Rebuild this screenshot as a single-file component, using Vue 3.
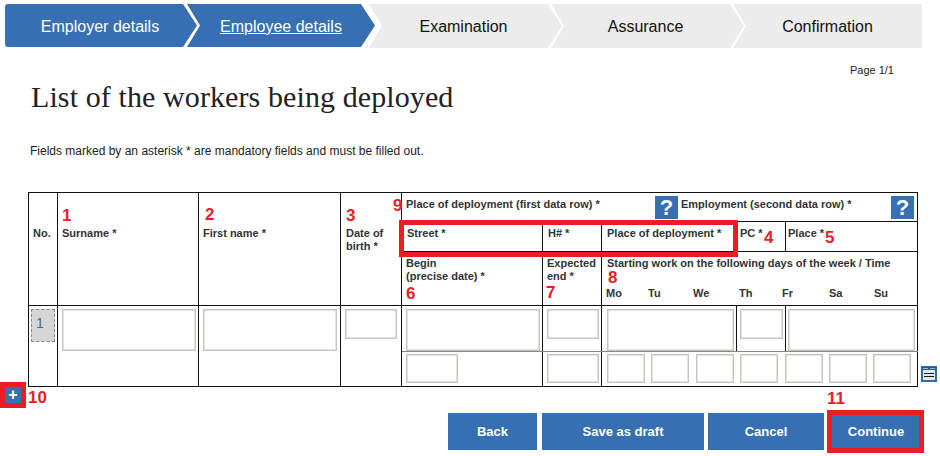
<template>
  <div class="page">
    <nav class="steps">
      <a
        v-for="(s, i) in steps"
        :key="s.label"
        :class="['step', `step-${i + 1}`, { done: s.done, current: s.current }]"
      >
        <span>{{ s.label }}</span>
      </a>
    </nav>

    <div class="page-no">Page 1/1</div>
    <h1>List of the workers being deployed</h1>
    <p class="hint">Fields marked by an asterisk * are mandatory fields and must be filled out.</p>

    <div class="table-wrap">
      <table>
        <colgroup>
          <col v-for="w in colWidths" :key="w.id" :style="{ width: w.px + 'px' }" />
        </colgroup>
        <tbody>
          <tr class="r-head1">
            <th rowspan="3" class="tall no">No.</th>
            <th rowspan="3" class="tall">Surname *</th>
            <th rowspan="3" class="tall">First name *</th>
            <th rowspan="3" class="tall dob">Date of<br />birth *</th>
            <th colspan="5" class="group-cell">
              <div class="groups">
                <div class="group first">
                  <span>Place of deployment (first data row) *</span>
                  <button class="help">?</button>
                </div>
                <div class="group second">
                  <span>Employment (second data row) *</span>
                  <button class="help">?</button>
                </div>
              </div>
            </th>
          </tr>
          <tr class="r-head2">
            <th class="pad5">Street *</th>
            <th class="pad5">H# *</th>
            <th class="pad5">Place of deployment *</th>
            <th class="pad3">PC *</th>
            <th class="pad2">Place *</th>
          </tr>
          <tr class="r-head3">
            <th>Begin<br />(precise date) *</th>
            <th>Expected<br />end *</th>
            <th colspan="3" class="pad5">
              Starting work on the following days of the week / Time
              <div class="days">
                <span v-for="d in days" :key="d">{{ d }}</span>
              </div>
            </th>
          </tr>
          <tr class="r-data1">
            <td rowspan="2" class="cell"><div class="row-no">1</div></td>
            <td rowspan="2" class="cell"><input class="wide tall-in" /></td>
            <td rowspan="2" class="cell"><input class="wide tall-in" /></td>
            <td rowspan="2" class="cell"><input class="short" /></td>
            <td class="cell soft"><input class="wide tall-in" /></td>
            <td class="cell soft"><input class="short" /></td>
            <td class="cell soft"><input class="place tall-in shift" /></td>
            <td class="cell soft"><input class="pc left" /></td>
            <td class="cell soft"><input class="place tall-in left2" /></td>
          </tr>
          <tr class="r-data2">
            <td class="cell"><input class="short low" /></td>
            <td class="cell"><input class="short low" /></td>
            <td colspan="3" class="cell">
              <div class="times">
                <input v-for="d in days" :key="d" class="time low" />
              </div>
            </td>
          </tr>
        </tbody>
      </table>

      <svg class="cal" viewBox="0 0 16 16" width="16" height="16">
        <rect width="16" height="16" fill="#2f6da8" />
        <rect x="1" y="1" width="14" height="3" fill="#1f5b96" />
        <rect x="2" y="2" width="5" height="1" fill="#9fb6cc" />
        <rect x="9" y="2" width="5" height="1" fill="#9fb6cc" />
        <rect x="2" y="4" width="12" height="10" fill="#dfe6ea" />
        <rect x="3" y="7" width="10" height="1" fill="#1a1a1a" />
        <rect x="3" y="10" width="10" height="1" fill="#1a1a1a" />
      </svg>
    </div>

    <div class="actions">
      <button class="btn back">Back</button>
      <button class="btn draft">Save as draft</button>
      <button class="btn cancel">Cancel</button>
      <button class="btn next">Continue</button>
    </div>

    <!-- red annotations sitting on top of the form -->
    <span
      v-for="n in marks"
      :key="n.t"
      class="mark"
      :style="{ left: n.x + 'px', top: n.y + 'px' }"
    >{{ n.t }}</span>
    <div class="box box-row"></div>
    <div class="box box-next"></div>
    <div class="box box-add"><div class="add">+</div></div>
  </div>
</template>

<script setup>
const steps = [
  { label: 'Employer details', done: true },
  { label: 'Employee details', done: true, current: true },
  { label: 'Examination' },
  { label: 'Assurance' },
  { label: 'Confirmation' }
];

const days = ['Mo', 'Tu', 'We', 'Th', 'Fr', 'Sa', 'Su'];

const colWidths = [29, 141, 142, 61, 141, 59, 135, 49, 132].map((px, id) => ({ id, px }));

const marks = [
  { t: '1', x: 62, y: 206 },
  { t: '2', x: 205, y: 205 },
  { t: '3', x: 346, y: 206 },
  { t: '9', x: 393, y: 196 },
  { t: '4', x: 764, y: 228 },
  { t: '5', x: 825, y: 228 },
  { t: '6', x: 406, y: 284 },
  { t: '7', x: 546, y: 283 },
  { t: '8', x: 608, y: 268 },
  { t: '10', x: 28, y: 388 },
  { t: '11', x: 827, y: 389 }
];
</script>

<style>
html,
body {
  margin: 0;
  background: #fff;
}
</style>

<style scoped>
.page {
  position: relative;
  width: 940px;
  height: 456px;
  overflow: hidden;
  font-family: "Liberation Sans", Arial, sans-serif;
  color: #222;
}

/* stepper */
.steps {
  display: flex;
  margin: 4px 18px 0 5px;
  height: 44px;
}

.step {
  display: flex;
  align-items: center;
  justify-content: center;
  flex: none;
  height: 44px;
  background: #ececec;
  color: #111;
  font-size: 16px;
  clip-path: polygon(0 0, calc(100% - 14px) 0, 100% 50%, calc(100% - 14px) 100%, 0 100%, 13px 50%);
}

.step span {
  padding: 2px 4px 0 0;
}

.step.done {
  height: 43px;
  background: #3670b2;
  color: #fff;
}

.step.current span {
  text-decoration: underline;
  padding-right: 0;
}

.step-1 {
  width: 192px;
  border-radius: 3px 0 0 3px;
  clip-path: polygon(0 0, calc(100% - 14px) 0, 100% 50%, calc(100% - 14px) 100%, 0 100%);
}

.step-1 span {
  padding-right: 2px;
}

.step-2 {
  width: 188px;
  margin-left: -10px;
}

.step-3 {
  width: 193px;
  margin-left: -6px;
}

.step-4 {
  width: 193px;
  margin-left: -11px;
}

.step-5 {
  width: 189px;
  margin-left: -11px;
  clip-path: polygon(0 0, 100% 0, 100% 100%, 0 100%, 13px 50%);
}

.step-5 span {
  padding-right: 0;
}

.page-no {
  margin: 16px 46px 0 0;
  text-align: right;
  font-size: 11px;
  line-height: 13px;
}

h1 {
  margin: 2px 0 0 31px;
  font-family: "Liberation Serif", Georgia, serif;
  font-size: 30px;
  line-height: 36px;
  letter-spacing: 0.1px;
  font-weight: 400;
  color: #222;
}

.hint {
  margin: 29px 0 0 30px;
  font-size: 12px;
  line-height: 14px;
}

/* table */
.table-wrap {
  position: relative;
  margin: 34px 0 0 28px;
  width: 912px;
}

table {
  width: 890px;
  table-layout: fixed;
  border-collapse: collapse;
  font-size: 11px;
  line-height: 13px;
}

th,
td {
  border: 1px solid #111;
  padding: 0;
  text-align: left;
  vertical-align: top;
}

th {
  padding: 5px 2px 0 4px;
  color: #333;
  font-weight: 700;
}

th.pad5 {
  padding-left: 5px;
}

th.pad3 {
  padding-left: 3px;
}

th.pad2 {
  padding-left: 2px;
}

.r-head1 { height: 29px; }
.r-head2 { height: 30px; }
.r-head3 { height: 54px; }
.r-data1 { height: 46px; }
.r-data2 { height: 35px; }

th.tall {
  padding-top: 34px;
}

th.dob {
  padding-left: 5px;
}

th.no {
  padding-right: 0;
}

th.group-cell {
  padding: 3px 0 0 4px;
}

.groups {
  display: flex;
}

.group {
  display: flex;
  justify-content: space-between;
  align-items: flex-start;
}

.group span {
  padding-top: 2px;
}

.group.first {
  width: 272px;
}

.group.second {
  width: 233px;
  margin-left: 3px;
}

.help {
  width: 23px;
  height: 23px;
  border: 0;
  padding: 0;
  background: #3670b2;
  color: #fff;
  font: 700 22px/23px "Liberation Sans", Arial, sans-serif;
}

.days {
  display: grid;
  grid-template-columns: 42px 45px 46px 43px 47px 45px auto;
  margin: 17px 0 0 -1px;
}

.cell {
  padding: 3px 0 0 4px;
}

td.soft {
  border-bottom-color: #888;
}

.row-no {
  box-sizing: border-box;
  width: 24px;
  height: 33px;
  margin-left: -2px;
  padding: 5px 0 0 4px;
  background: #d6d6d6;
  border: 1px dashed #888;
  color: #4f6688;
  font-size: 14px;
  line-height: 16px;
}

input {
  display: block;
  box-sizing: border-box;
  margin: 0;
  padding: 0;
  height: 30px;
  border: 1px solid #c8c5bf;
  box-shadow: inset 0 0 0 1px #e4e2de;
  background: #fff;
  outline: none;
}

.tall-in { height: 42px; }
.low { height: 29px; margin-top: -1px; }
.wide { width: 134px; }
.short { width: 52px; }
.place { width: 127px; }
.pc { width: 43px; }
.time { width: 38px; }
.shift { margin-left: 1px; }
.left { margin-left: -1px; }
.left2 { margin-left: -2px; }

.times {
  display: grid;
  grid-template-columns: repeat(7, 38px);
  column-gap: 6.4px;
  margin-left: 1px;
}

.cal {
  position: absolute;
  left: 893px;
  top: 174px;
}

/* bottom buttons */
.actions {
  display: flex;
  gap: 4px;
  margin: 26px 0 0 448px;
}

.btn {
  height: 37px;
  border: 0;
  padding: 0;
  background: #3670b2;
  color: #fff;
  font: 700 13px "Liberation Sans", Arial, sans-serif;
}

.back { width: 89px; margin-right: 1px; }
.draft { width: 162px; }
.cancel { width: 116px; }
.next { width: 88px; margin-left: 4px; }

/* annotations */
.mark {
  position: absolute;
  color: #ed1c24;
  font-size: 17px;
  font-weight: 700;
  line-height: 20px;
}

.box {
  position: absolute;
  box-sizing: border-box;
  border: 5px solid #ed1c24;
}

.box-row {
  left: 399px;
  top: 220px;
  width: 339px;
  height: 37px;
}

.box-next {
  left: 827px;
  top: 410px;
  width: 97px;
  height: 43px;
}

.box-add {
  left: 0;
  top: 382px;
  width: 26px;
  height: 26px;
}

.add {
  width: 16px;
  height: 16px;
  background: #3670b2;
  color: #fff;
  font-size: 16px;
  font-weight: 700;
  line-height: 15px;
  text-align: center;
}
</style>
